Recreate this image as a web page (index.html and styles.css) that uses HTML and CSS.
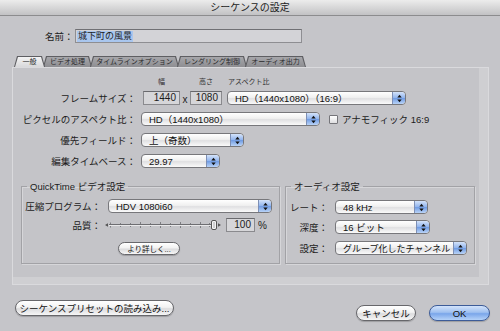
FILE: index.html
```html
<!DOCTYPE html>
<html lang="ja">
<head>
<meta charset="utf-8">
<title>シーケンスの設定</title>
<link rel="stylesheet" href="styles.css">
</head>
<body>
<div class="titlebar">シーケンスの設定</div>

<div class="name-row">
  <span class="name-label">名前：</span>
  <div class="name-field"><span class="sel">城下町の風景</span></div>
</div>

<div class="tabs">
  <div class="tab active t1">一般</div>
  <div class="tab t2">ビデオ処理</div>
  <div class="tab t3">タイムラインオプション</div>
  <div class="tab t4">レンダリング制御</div>
  <div class="tab t5">オーディオ出力</div>
</div>

<div class="panel">
  <div class="panel-inner">
    <div class="col-heads">
      <span class="h-w">幅</span>
      <span class="h-h">高さ</span>
      <span class="h-a">アスペクト比</span>
    </div>

    <div class="row">
      <span class="label">フレームサイズ：</span>
      <div class="numfield nf-w">1440</div>
      <span class="times">x</span>
      <div class="numfield nf-h">1080</div>
      <div class="popup pp-aspect"><span class="pv">HD（1440x1080）（16:9）</span><span class="cap"><svg width="5" height="9" viewBox="0 0 5 9"><polygon points="0.3,3.6 2.5,0.8 4.7,3.6" fill="#111"/><polygon points="0.3,5.4 2.5,8.2 4.7,5.4" fill="#111"/></svg></span></div>
    </div>

    <div class="row">
      <span class="label">ピクセルのアスペクト比：</span>
      <div class="popup pp-pixel"><span class="pv">HD（1440x1080）</span><span class="cap"><svg width="5" height="9" viewBox="0 0 5 9"><polygon points="0.3,3.6 2.5,0.8 4.7,3.6" fill="#111"/><polygon points="0.3,5.4 2.5,8.2 4.7,5.4" fill="#111"/></svg></span></div>
      <span class="checkbox"></span>
      <span class="check-label">アナモフィック 16:9</span>
    </div>

    <div class="row">
      <span class="label">優先フィールド：</span>
      <div class="popup pp-field"><span class="pv">上（奇数）</span><span class="cap"><svg width="5" height="9" viewBox="0 0 5 9"><polygon points="0.3,3.6 2.5,0.8 4.7,3.6" fill="#111"/><polygon points="0.3,5.4 2.5,8.2 4.7,5.4" fill="#111"/></svg></span></div>
    </div>

    <div class="row">
      <span class="label">編集タイムベース：</span>
      <div class="popup pp-tb"><span class="pv">29.97</span><span class="cap"><svg width="5" height="9" viewBox="0 0 5 9"><polygon points="0.3,3.6 2.5,0.8 4.7,3.6" fill="#111"/><polygon points="0.3,5.4 2.5,8.2 4.7,5.4" fill="#111"/></svg></span></div>
    </div>

    <div class="groups">
      <fieldset class="group qt">
        <legend>QuickTime ビデオ設定</legend>
        <div class="grow">
          <span class="glabel qt-label">圧縮プログラム：</span>
          <div class="popup pp-codec"><span class="pv">HDV 1080i60</span><span class="cap"><svg width="5" height="9" viewBox="0 0 5 9"><polygon points="0.3,3.6 2.5,0.8 4.7,3.6" fill="#111"/><polygon points="0.3,5.4 2.5,8.2 4.7,5.4" fill="#111"/></svg></span></div>
        </div>
        <div class="grow grow-q">
          <span class="glabel qt-label">品質：</span>
          <svg class="slider" width="116" height="12" viewBox="0 0 116 12">
            <polygon points="0,6 3,4.3 3,7.7" fill="#555"/>
            <line x1="4" y1="5.5" x2="109" y2="5.5" stroke="#6e6e72" stroke-width="1"/>
            <line x1="4" y1="6.5" x2="109" y2="6.5" stroke="#e8e8ea" stroke-width="1"/>
            <g stroke="#6e6e72" stroke-width="0.8">
              <line x1="5.5" y1="3.5" x2="5.5" y2="5"/><line x1="5.5" y1="7" x2="5.5" y2="8.5"/>
              <line x1="15.5" y1="4" x2="15.5" y2="5"/><line x1="15.5" y1="7" x2="15.5" y2="8"/>
              <line x1="25.5" y1="4" x2="25.5" y2="5"/><line x1="25.5" y1="7" x2="25.5" y2="8"/>
              <line x1="35.5" y1="3" x2="35.5" y2="5"/><line x1="35.5" y1="7" x2="35.5" y2="9"/>
              <line x1="45.5" y1="4" x2="45.5" y2="5"/><line x1="45.5" y1="7" x2="45.5" y2="8"/>
              <line x1="55.5" y1="3" x2="55.5" y2="5"/><line x1="55.5" y1="7" x2="55.5" y2="9"/>
              <line x1="65.5" y1="4" x2="65.5" y2="5"/><line x1="65.5" y1="7" x2="65.5" y2="8"/>
              <line x1="75.5" y1="3" x2="75.5" y2="5"/><line x1="75.5" y1="7" x2="75.5" y2="9"/>
              <line x1="85.5" y1="4" x2="85.5" y2="5"/><line x1="85.5" y1="7" x2="85.5" y2="8"/>
              <line x1="95.5" y1="3" x2="95.5" y2="5"/><line x1="95.5" y1="7" x2="95.5" y2="9"/>
              <line x1="104.5" y1="4" x2="104.5" y2="5"/><line x1="104.5" y1="7" x2="104.5" y2="8"/>
            </g>
            <rect x="106.5" y="1.5" width="5" height="9" rx="1.5" fill="#f4f4f4" stroke="#555" stroke-width="1"/>
            <line x1="109" y1="3" x2="109" y2="9" stroke="#9a9a9e" stroke-width="0.8"/>
            <polygon points="116,6 113,4.3 113,7.7" fill="#555"/>
          </svg>
          <div class="numfield nf-q">100</div>
          <span class="pct">%</span>
        </div>
        <div class="btn btn-more">より詳しく...</div>
      </fieldset>

      <fieldset class="group audio">
        <legend>オーディオ設定</legend>
        <div class="grow">
          <span class="glabel au-label">レート：</span>
          <div class="popup pp-rate"><span class="pv">48 kHz</span><span class="cap"><svg width="5" height="9" viewBox="0 0 5 9"><polygon points="0.3,3.6 2.5,0.8 4.7,3.6" fill="#111"/><polygon points="0.3,5.4 2.5,8.2 4.7,5.4" fill="#111"/></svg></span></div>
        </div>
        <div class="grow grow-d">
          <span class="glabel au-label">深度：</span>
          <div class="popup pp-depth"><span class="pv">16 ビット</span><span class="cap"><svg width="5" height="9" viewBox="0 0 5 9"><polygon points="0.3,3.6 2.5,0.8 4.7,3.6" fill="#111"/><polygon points="0.3,5.4 2.5,8.2 4.7,5.4" fill="#111"/></svg></span></div>
        </div>
        <div class="grow grow-s">
          <span class="glabel au-label">設定：</span>
          <div class="popup pp-set"><span class="pv">グループ化したチャンネル</span><span class="cap"><svg width="5" height="9" viewBox="0 0 5 9"><polygon points="0.3,3.6 2.5,0.8 4.7,3.6" fill="#111"/><polygon points="0.3,5.4 2.5,8.2 4.7,5.4" fill="#111"/></svg></span></div>
        </div>
      </fieldset>
    </div>
  </div>
</div>

<div class="footer">
  <div class="btn btn-preset">シーケンスプリセットの読み込み...</div>
  <div class="btn btn-cancel">キャンセル</div>
  <div class="btn btn-ok">OK</div>
</div>
</body>
</html>
```

FILE: styles.css
```css
* { box-sizing: border-box; }
html, body { margin: 0; padding: 0; }
body {
  width: 500px;
  height: 331px;
  overflow: hidden;
  background: #c5c5c9;
  font-family: "Liberation Sans", "Noto Sans CJK JP", sans-serif;
  font-size: 9.5px;
  color: #1c1c1c;
}

.titlebar {
  height: 16px;
  line-height: 15px;
  text-align: center;
  font-size: 10px;
  color: #222;
  background: linear-gradient(#ececec, #c2c2c4);
  border-bottom: 1px solid #8c8c8e;
}

/* name row */
.name-row {
  display: flex;
  align-items: center;
  height: 14px;
  margin: 13px 0 0 45px;
}
.name-label { width: 30px; }
.name-field {
  width: 227px;
  height: 14px;
  background: #d3d3d7;
  border: 1px solid #8e8e92;
  border-top-color: #707074;
  padding: 0 1px;
  display: flex;
  align-items: center;
  font-size: 9px;
}
.sel { background: #a9c6ee; line-height: 11px; padding: 0 1px; }

/* tabs */
.tabs {
  display: flex;
  height: 11px;
  margin: 13px 0 0 14px;
}
.tab {
  position: relative;
  z-index: 0;
  margin-right: -2px;
  font-size: 7px;
  line-height: 11px;
  text-align: center;
  color: #2a2a2c;
}
.t1 { width: 31px; }
.t2 { width: 49px; }
.t3 { width: 89px; }
.t4 { width: 70px; }
.t5 { width: 61px; }
.tab::before, .tab::after {
  content: "";
  position: absolute;
  z-index: -1;
  clip-path: polygon(3px 0, calc(100% - 3px) 0, 100% 100%, 0 100%);
}
.tab::before { inset: 0; background: #5e5e62; }
.tab::after { inset: 1px 1px 0 1px; background: linear-gradient(#a6a6aa, #8e8e92); }
.tab.active { z-index: 2; }
.tab.active::after { background: linear-gradient(#f4f4f4, #d8d8da); }

/* panel */
.panel {
  height: 218px;
  margin: 0 11px 0 12px;
  border: 1px solid #dadadd;
  background: #cfcfd2;
  padding: 0 9px 7px 0;
}
.panel-inner {
  height: 100%;
  background: #c4c4c8;
  padding-top: 9px;
}
.col-heads {
  display: flex;
  height: 10px;
  line-height: 10px;
  font-size: 7px;
  color: #333;
  padding-left: 130px;
}
.h-w { width: 37px; text-align: center; }
.h-h { width: 32px; margin-left: 10px; text-align: center; }
.h-a { margin-left: 6px; }

.row {
  display: flex;
  align-items: center;
  height: 14px;
  margin-top: 7px;
}
.col-heads + .row { margin-top: 4px; }
.label { width: 123px; text-align: right; margin-right: 5px; }

.numfield {
  height: 14px;
  background: #d6d6d9;
  border: 1px solid #8a8a8e;
  border-top-color: #69696d;
  text-align: right;
  padding-right: 3px;
  font-size: 10px;
  line-height: 12px;
}
.nf-w { width: 37px; margin-left: 2px; }
.times { width: 10px; text-align: center; font-size: 10px; padding-top: 3px; }
.nf-h { width: 32px; }

.popup {
  height: 14px;
  display: flex;
  align-items: center;
  border: 1px solid #77777b;
  border-radius: 4px;
  background: linear-gradient(#ffffff, #f0f0f0 45%, #e0e0e2 55%, #fafafa);
  padding-left: 7px;
  font-size: 9.5px;
  color: #111;
  overflow: hidden;
}
.pv { white-space: nowrap; overflow: hidden; min-width: 0; }
.cap {
  margin-left: auto;
  width: 13px;
  height: 12px;
  flex: none;
  display: flex;
  align-items: center;
  justify-content: center;
  border-left: 1px solid #7d8fb5;
  border-radius: 0 3px 3px 0;
  background: linear-gradient(#d4e3fa, #92b5ee 48%, #6f9be3 52%, #b9d3f7);
}
.pp-aspect { width: 179px; margin-left: 5px; }
.pp-pixel { width: 179px; }
.pp-field { width: 103px; }
.pp-tb { width: 79px; }

.checkbox {
  width: 9px;
  height: 9px;
  margin-left: 9px;
  border: 1px solid #75757a;
  border-radius: 1px;
  background: linear-gradient(#ffffff, #dedee0);
}
.check-label { margin-left: 4px; }

/* groups */
.groups {
  display: flex;
  margin-top: 12px;
  padding-left: 8px;
}
.group {
  margin: 0;
  padding: 0;
  min-width: 0;
  border: 1px solid #a2a2a6;
  box-shadow: inset 1px 1px 0 #d6d6d9, 1px 1px 0 #d6d6d9;
}
.group legend {
  margin-left: 5px;
  padding: 0 3px;
  font-size: 9.5px;
  line-height: 13px;
}
.qt { width: 259px; padding: 6px 0 8px; }
.audio { width: 190px; margin-left: 5px; padding: 7px 0 8px; }

.grow { display: flex; align-items: center; height: 14px; }
.glabel { text-align: right; }
.qt-label { width: 79px; margin-right: 7px; }
.au-label { width: 42px; margin-right: 7px; }
.pp-codec { width: 164px; }
.grow-q { margin-top: 5px; }
.slider { margin-left: -3px; display: block; }
.nf-q { width: 29px; margin-left: 5px; }
.pct { margin-left: 3px; font-size: 10px; }

.pp-rate { width: 93px; }
.grow-d { margin-top: 6px; }
.pp-depth { width: 95px; }
.grow-s { margin-top: 7px; }
.pp-set { width: 132px; font-size: 9px; }

/* buttons */
.btn {
  height: 16px;
  display: flex;
  align-items: center;
  justify-content: center;
  border: 1px solid #67676b;
  border-radius: 8px;
  background: linear-gradient(#ffffff, #f2f2f2 45%, #dcdcde 55%, #f6f6f6);
  box-shadow: 0 1px 1px rgba(0, 0, 0, 0.2);
  font-size: 9.5px;
  color: #111;
  white-space: nowrap;
}
.btn-more {
  width: 62px;
  height: 13px;
  margin: 10px 0 0 96px;
  font-size: 7.5px;
}

.footer {
  display: flex;
  align-items: flex-start;
  margin-top: 15px;
  padding: 0 10px 0 15px;
}
.btn-preset { width: 159px; }
.btn-cancel { width: 60px; margin-left: auto; margin-top: 5px; }
.btn-ok {
  width: 61px;
  margin-left: 13px;
  margin-top: 5px;
  border-color: #3d5c98;
  background: linear-gradient(#d3e3fa, #9fc0f0 45%, #7aa6ea 55%, #b5d2f8);
}
```
